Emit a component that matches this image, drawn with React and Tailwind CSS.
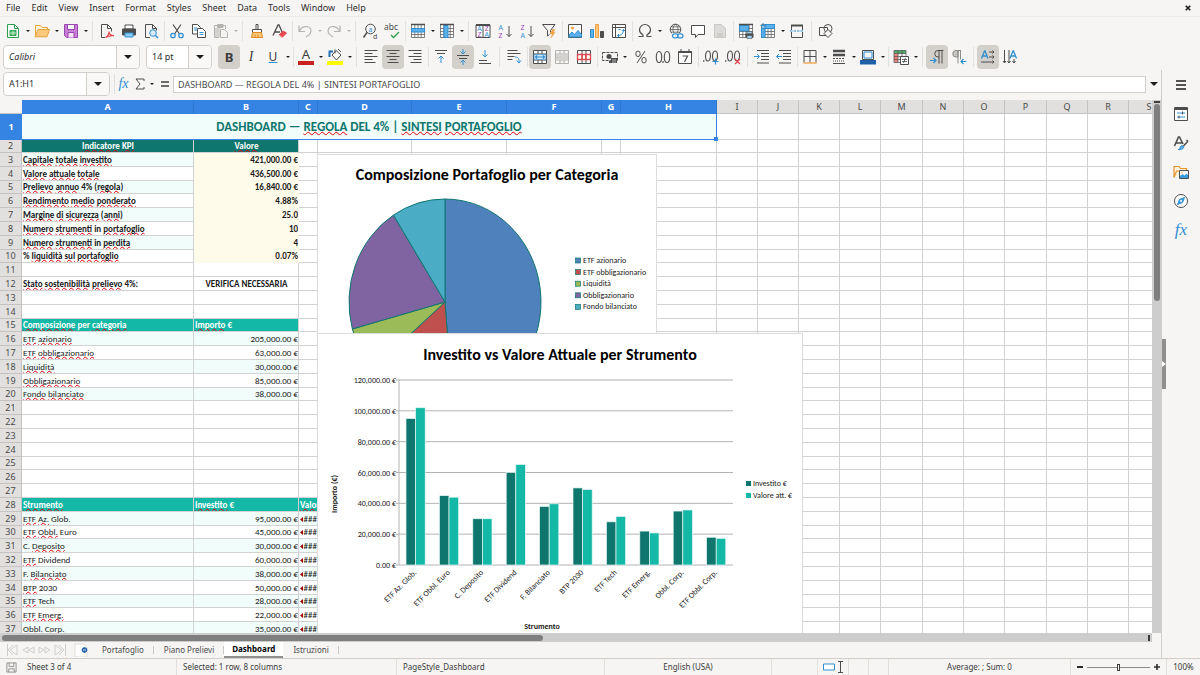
import clsx from 'clsx'

// ── Icon palette ─────────────────────────────────────────────────────
const K = '#4d4d4d'
const B = '#2f8fd3'
const R = '#e5484d'
const O = '#f0a040'
const G = '#b5b3b0'

const Az = ({ x, y, t, c }) => (
  <text x={x} y={y} fontSize="7" fontFamily="Noto Sans, sans-serif" fill={c}>{t}</text>
)

const GridLines = ({ c = K }) => (
  <path d="M1.5 1.5h13v13h-13zM1.5 5.500h13M1.5 8.5h13M1.500 11.500h13M4.8 1.5v13M8 1.5v13M11.2 1.5v13" fill="#fff" stroke={c} strokeWidth=".7" />
)

const ICONS = {
  new: <><path d="M2.5 1.5h7l4 4v9h-11z" fill="#fff" stroke="#2e9e4f" /><path d="M9.5 1.5v4h4" stroke="#2e9e4f" /><path d="M5 7.5h6v5H5z" fill="#48b864" stroke="#2e9e4f" /><path d="M5 10h6M8 7.5v5" stroke="#fff" strokeWidth=".7" /></>,
  open: <><path d="M1.5 13.5v-11h5l1.5 2h5.5v2" fill="#fff3dc" stroke="#e8a33d" /><path d="M1 13.8l3-7.3h11.5l-2.5 7.3z" fill="#fbc87c" stroke="#e8a33d" /></>,
  save: <><path d="M1.5 1.5h13v13h-11l-2-2z" fill="#c77fd6" stroke="#9b45b2" /><path d="M4.5 1.5h7v5h-7z" fill="#fff" stroke="#9b45b2" /><path d="M5 14.5v-5h6v5" fill="#f4e3f8" stroke="#9b45b2" /></>,
  pdf: <><path d="M2.5 1.5h6l4 4v3M6 14.5H2.5v-13" stroke={K} /><path d="M8.5 1.5v4h4" stroke={K} /><path d="M6.5 14.500c2.500-1.500 3.500-3.500 3.500-6 0 2.500 2 4 5 4.200-3-.2-6 .3-8.500 1.800z" stroke={R} strokeWidth="1.200" /></>,
  print: <><path d="M4 2h8v4H4z" fill="#fff" stroke={K} /><path d="M1.500 6h13v6h-13z" fill={K} stroke={K} /><path d="M4 10h8v4H4z" fill="#8ecbf2" stroke={B} /></>,
  preview: <><path d="M2.5 1.5h7l4 4v2M7 14.500H2.500v-13M9.500 1.500v4h4" stroke={K} /><circle cx="10" cy="10" r="3.300" fill="#d6ecfa" stroke={B} /><path d="M12.500 12.500l2.500 2.500" stroke={B} strokeWidth="1.500" /></>,
  cut: <><path d="M4 1.500l6.500 9.500M12 1.500L5.500 11" stroke={K} strokeWidth="1.200" /><circle cx="4" cy="12.500" r="2.200" stroke={B} strokeWidth="1.300" /><circle cx="12" cy="12.500" r="2.200" stroke={B} strokeWidth="1.300" /></>,
  copy: <><path d="M1.500 1.500h5l3 3v6.500h-8z" fill="#fff" stroke={K} /><path d="M6.500 5.500h5l3 3v6h-8z" fill="#fff" stroke={K} /><path d="M3 5h3M3 7h3M8.500 9.500h4M8.500 11.500h4" stroke={B} /></>,
  paste: <><path d="M5 2.500H1.500v12H6M10 2.500h2.500V6" stroke={G} /><path d="M4.500 1.500h5.500v3H4.500z" fill={G} stroke={G} /><path d="M2 5h5v9H2z" fill="#d4d2cf" /><path d="M7.500 6.500h4l3 3v5h-7z" fill="#f3f2f1" stroke={G} /></>,
  brush: <><path d="M7 1.500h2v5H7zM3.500 6.500h9v3h-9z" fill="#fff" stroke={K} /><path d="M3.500 9.500h9l1 5h-11z" fill="#fbc87c" stroke="#e08a1e" /><path d="M6 11.500v3M9 11.500v3" stroke="#e08a1e" /></>,
  clear: <><path d="M2 12.500L7 2h1l3.500 8M4 9h5" stroke={K} strokeWidth="1.300" /><path d="M8 12l4-4 3.500 2-4.500 4.500z" fill={R} stroke={R} /><path d="M8 12l3 2.500" stroke="#fff" strokeWidth=".6" /></>,
  undo: <path d="M2 2.500v6h6M2.500 8c2-5 9-6 11-2 1.500 3-1 6-4.500 8" stroke={G} strokeWidth="1.200" />,
  redo: <path d="M14 2.500v6H8M13.500 8c-2-5-9-6-11-2-1.500 3 1 6 4.500 8" stroke={G} strokeWidth="1.200" />,
  find: <><circle cx="8.500" cy="6" r="4.800" stroke={K} /><path d="M5 9.500l-3.500 5" stroke={K} strokeWidth="1.500" /><Az x="6.500" y="8.500" t="a" c={B} /><Az x="11" y="15.500" t="d" c={K} /></>,
  spell: <><text x="0" y="7" fontSize="8.500" fontFamily="Noto Sans, sans-serif" fill={K}>abc</text><path d="M7 12l2.500 2.500L15 9" stroke="#2e9e4f" strokeWidth="1.300" /></>,
  rows: <><GridLines /><path d="M1.500 5.500h13v3.500h-13z" fill="#5bb0ea" stroke={B} /><path d="M1 1.500h14" stroke={K} strokeWidth="1.500" /></>,
  cols: <><GridLines /><path d="M5 2.500h4v12H5z" fill="#5bb0ea" stroke={B} /><path d="M1 1.500h14" stroke={K} strokeWidth="1.500" /></>,
  sort: <><path d="M1 2h14v12.500H1zM8 2v12" stroke={K} fill="#fff" /><path d="M1 2h14" stroke={K} strokeWidth="2" /><Az x="2.300" y="8.200" t="A" c={B} /><Az x="2.500" y="14.200" t="Z" c="#a33bbd" /><Az x="9.800" y="8.200" t="Z" c="#a33bbd" /><Az x="9.500" y="14.200" t="A" c={B} /></>,
  asc: <><Az x="1.500" y="7" t="A" c={B} /><Az x="1.500" y="15" t="Z" c="#a33bbd" /><path d="M12 3v10.500M9.500 11l2.500 2.500 2.500-2.500" stroke={K} /></>,
  desc: <><Az x="1.500" y="7" t="Z" c="#a33bbd" /><Az x="1.500" y="15" t="A" c={B} /><path d="M12 3v10.500M9.500 11l2.500 2.500 2.500-2.500" stroke={K} /></>,
  filter: <><path d="M1.500 1.500h12.500L9.500 7.500v2M6.500 7.500v5.500l2-1.500M1.500 1.500l5 6" stroke={K} /><path d="M11.500 6.500L9 11h2.500l-1.500 4 4-5.500h-2l2-3z" fill={O} stroke={O} strokeWidth=".5" /></>,
  image: <><path d="M1.500 1.500h13v13h-13z" fill="#fff" stroke={K} /><circle cx="5.500" cy="5" r="1.500" fill={O} /><path d="M2 14v-2l3-3 2.500 2.500L11 7.500l3.500 4V14z" fill="#5bb0ea" stroke={B} /></>,
  chart: <><path d="M1.500 6.500h3v8h-3z" fill="#5bb0ea" stroke={B} /><path d="M6.500 1.500h3v13h-3z" fill="#fbc87c" stroke={O} /><path d="M11.500 8.500h3v6h-3z" fill={K} stroke={K} /></>,
  pivot: <><path d="M1.500 1.500h13v13h-13zM1.500 4.500h13M4.500 1.500v13" fill="#fff" stroke={K} /><path d="M12.500 6.500c0 4-2 6-6 6M11 8l1.500-1.500L14 8M8 11l-1.500 1.500L8 14M7.500 6.500h2" stroke={B} /></>,
  omega: <path d="M1.500 13.500H6v-1.500C3.500 10.500 2.500 9 2.500 7a5.500 5.500 0 0111 0c0 2-1 3.500-3.500 5v1.500h4.500" stroke={K} strokeWidth="1.200" />,
  link: <><circle cx="7.500" cy="6.500" r="5.300" stroke={K} /><path d="M2.200 6.500h10.600M7.500 1.200c-3.500 3-3.500 7.500 0 10.600M7.500 1.200c3.500 3 3.500 7.500 0 10.600M3 3.800h9M3 9.200h9" stroke={K} strokeWidth=".7" /><path d="M4 10h12v5.500H4z" fill="#f6f5f4" /><rect x="4.500" y="10.800" width="5.500" height="4" rx="2" stroke={B} strokeWidth="1.200" /><rect x="9.500" y="10.800" width="5.500" height="4" rx="2" stroke={B} strokeWidth="1.200" /></>,
  comment: <path d="M1.500 2.500h13v9H8L5.500 14.500v-3h-4z" fill="#fff" stroke={K} />,
  doc: <><path d="M2.500 1.500h7l4 4v9h-11z" fill="#dcdbd9" stroke="#cbc9c6" /><path d="M5 10h6v4H5z" fill="#cfcdca" /></>,
  printArea: <><GridLines /><path d="M1.500 2.500h9v5.500h-9z" fill="#5bb0ea" stroke={B} /><path d="M1 1.500h14" stroke={K} strokeWidth="1.500" /><path d="M7.500 10.500h8v4h-8z" fill={K} /><path d="M9 8.500h5v2H9zM9 12.500h5v3H9z" fill="#9fd2f3" stroke={K} strokeWidth=".6" /></>,
  freeze: <><GridLines /><path d="M5 1.500h9.500v4H5zM1.500 5.500H5v9H1.500z" fill="#5bb0ea" stroke={B} /><path d="M3 0v5M.5 2.500h5" stroke={B} /></>,
  split: <><path d="M2.500 7V2.500h11V7M2.500 9v5.500h11V9" stroke={K} /><path d="M2 2.500h12" stroke={K} strokeWidth="2" /><path d="M1 8h14" stroke={B} strokeDasharray="2.500 1" /></>,
  shapes: <><path d="M1.500 4.500h8v8h-8z" stroke={K} /><circle cx="10" cy="5.500" r="4" stroke={K} /><path d="M10 6.500l4 4-4 4-4-4z" fill="#f6f5f4" stroke={K} /></>,
  left: <path d="M1.500 1.500h13M1.500 4.500h8M1.500 7.500h13M1.500 10.500h8M1.500 13.500h11" stroke={K} />,
  center: <path d="M1.500 1.500h13M4.500 4.500h7M1.500 7.500h13M4.500 10.500h7M2.500 13.500h11" stroke={K} />,
  right: <path d="M1.500 1.500h13M6.500 4.500h8M1.500 7.500h13M6.500 10.500h8M3.500 13.500h11" stroke={K} />,
  top: <><path d="M2 1.500h12M4 4.500h8" stroke={K} /><path d="M8 14V7M5.500 9.500L8 7l2.500 2.500" stroke={B} /></>,
  middle: <><path d="M2 6.500h12M4 9.500h8" stroke={K} /><path d="M8 0v5M5.500 2.500L8 5l2.500-2.500M8 16v-5M5.500 13.500L8 11l2.500 2.500" stroke={B} /></>,
  bottom: <><path d="M2 11.500h8M2 14.500h12" stroke={K} /><path d="M8 1v7M5.500 5.500L8 8l2.500-2.500" stroke={B} /></>,
  wrap: <><path d="M1.500 1.500h10M1.500 4.500h13M1.500 7.500h7M1.500 10.500h5" stroke={K} /><path d="M9 8c4 0 4 2 4 5.500M10.500 11.500l2.500 2.500 2-2.500" stroke={B} /></>,
  merge: <><path d="M1.500 1.500h13v13h-13zM1.500 5h13M1.500 11h13M6 1.500V5M10 1.500V5M6 11v3.500M10 11v3.500" fill="#fff" stroke={K} /><path d="M2 5.500h12v5H2z" fill="#cde7f9" stroke={B} strokeWidth=".6" /><path d="M3 8h10M5 6.500L3.500 8 5 9.500M11 6.500L12.500 8 11 9.500" stroke={B} strokeWidth="1.200" /></>,
  mergeOff: <><path d="M1.500 1.500h13v13h-13zM1.500 5h13M1.500 11h13M6 1.500V5M10 1.500V5M6 11v3.500M10 11v3.500" stroke={G} /><path d="M2 6h12v4H2z" fill="#d4d2cf" /></>,
  unmerge: <><path d="M1.500 1.500h13v13h-13zM6 1.500v13M10 1.500v13" fill="#fff" stroke={K} /><path d="M1.500 5.500h13v5h-13zM6 5.500v5M10 5.500v5" stroke={R} strokeWidth="1.300" /></>,
  currency: <><path d="M.5 3.500h15v8h-15z" stroke={K} strokeDasharray="3 1" /><circle cx="7" cy="7.500" r="2.500" fill={K} /><path d="M9 9h6v5H7v-2h2z" fill={K} /><path d="M10 11h4M10 13h4" stroke="#fff" strokeWidth=".6" /></>,
  percent: <><ellipse cx="5" cy="4.800" rx="2.200" ry="2.800" stroke={K} /><ellipse cx="11" cy="11.200" rx="2.200" ry="2.800" stroke={K} /><path d="M12 2L4 14" stroke={K} /></>,
  number: <><ellipse cx="4" cy="8" rx="2.700" ry="5.500" stroke={K} strokeWidth="1.100" /><ellipse cx="12" cy="8" rx="2.700" ry="5.500" stroke={K} strokeWidth="1.100" /><path d="M8 12v2" stroke={K} strokeWidth="1.200" /></>,
  date: <><path d="M1.500 2.500h13v12h-13z" stroke={K} fill="#fff" /><path d="M1.500 3h13" stroke={K} strokeWidth="2" /><path d="M4 0v3M12 0v3" stroke={K} /><path d="M5.500 7h5l-3 6" stroke={K} strokeWidth="1.200" /></>,
  addDec: <><ellipse cx="5" cy="7" rx="2.500" ry="5" stroke={K} strokeWidth="1.100" /><ellipse cx="12" cy="7" rx="2.500" ry="5" stroke={K} strokeWidth="1.100" /><path d="M.8 11v2" stroke={K} /><path d="M9.500 12.500h6M12.500 9.500v6" stroke={B} strokeWidth="1.200" /></>,
  delDec: <><ellipse cx="5" cy="7" rx="2.500" ry="5" stroke={K} strokeWidth="1.100" /><ellipse cx="12" cy="7" rx="2.500" ry="5" stroke={K} strokeWidth="1.100" /><path d="M.8 11v2" stroke={K} /><path d="M10 10l5 5M15 10l-5 5" stroke={R} strokeWidth="1.200" /></>,
  indent: <><path d="M3 1.500h12M7 4.500h8M7 7.500h8M7 10.500h8M3 14h12" stroke={K} /><path d="M0 7.500h5M3 5l2.500 2.500L3 10" stroke={B} /></>,
  outdent: <><path d="M3 1.500h12M7 4.500h8M7 7.500h8M7 10.500h8M3 14h12" stroke={K} /><path d="M.5 7.500H6M3 5L.5 7.500 3 10" stroke={B} /></>,
  borders: <><path d="M2 1.500h12v12M2 1.500v12M8 1.500v12M2 7.500h12" stroke={K} /><path d="M1.500 14h13" stroke={O} strokeWidth="1.300" /></>,
  lines: <><path d="M2 2h12M2 6h12" stroke={K} strokeWidth="2.500" /><path d="M2 9.500h12" stroke={K} strokeDasharray="2 1" /><path d="M2 12h12" stroke={K} strokeDasharray="1 1" /><path d="M2 14.500h12" stroke={K} /></>,
  borderColor: <><path d="M2.500 1.500h11v9h-11z" stroke={K} /><path d="M4 3h8v6H4z" stroke={B} /><path d="M0 11h16v4.500H0z" fill="#1f5fa8" /></>,
  cond: <><path d="M1 1.500h12v3H1z" fill="#4fae6a" /><path d="M1 4.500h4v9H1z" fill="#f0837f" /><path d="M1 1.500h12v12H1zM1 4.500h12M1 7.500h12M1 10.500h12M5 1.500v12M9 1.500v12" stroke={K} strokeWidth=".7" /><path d="M7.500 7.500h8v8h-8z" fill="#fff" stroke={K} /><path d="M9 10.500h5M9 12.500h5M12.500 9l-2 5" stroke={K} strokeWidth=".8" /></>,
  ltr: <><path d="M14.500 1.500H9a3 3 0 000 6.500h1M10 1.500v13M13 1.500v13" stroke={K} /><path d="M1 11.500h6M4.500 9L7 11.500 4.500 14" stroke={B} strokeWidth="1.200" /></>,
  rtl: <><path d="M7 1.500H5A3 3 0 005 8h2z" fill="#c9c7c4" stroke="#8d8b88" /><path d="M5 1.500h5M7 1.500v13M9.500 1.500v9" stroke="#8d8b88" /><path d="M10 12.500h5.500M12.500 10L10 12.500l2.500 2.500" stroke={B} strokeWidth="1.200" /></>,
  textH: <><path d="M1.500 9.500L4.500 2h.5l3 7.500M2.500 7h4.500" stroke={B} strokeWidth="1.300" /><path d="M9 3h5M12.500 1.500L14 3l-1.500 1.500M9 8h5M12.500 6.500L14 8l-1.500 1.500M1 13h13M12.500 11.500L14 13l-1.500 1.500" stroke={K} /></>,
  textV: <><path d="M8 9.500L11 2h.5l3 7.500M9 7h4.500" stroke={B} strokeWidth="1.300" /><path d="M2.500 1v13M1 12l1.500 2L4 12M7 1v13M5.500 12L7 14l1.500-2M12 10v4M10.500 12l1.500 2 1.500-2" stroke={K} /></>,
}

const Icon = ({ name, className = 'size-4' }) => (
  <svg viewBox="0 0 16 16" fill="none" className={clsx('shrink-0 overflow-visible', className)} aria-hidden="true">{ICONS[name]}</svg>
)

const Caret = ({ dim, big }) => (
  <svg viewBox="0 0 8 4" className={big ? 'w-2 h-1 shrink-0' : 'w-1 h-0.5 shrink-0'} aria-hidden="true">
    <path d="M0 0h8l-4 4z" fill={dim ? '#b5b3b0' : '#1d1d1d'} />
  </svg>
)

const Tool = ({ name, on, menu, dim, children }) => (
  <div className="flex shrink-0">
    <button type="button" aria-label={name} className={clsx('flex h-6 w-[22px] items-center justify-center rounded', on && 'bg-[#d3cfca]')}>
      {children || <Icon name={name} />}
    </button>
    {menu && (
      <button type="button" aria-label={`${name} options`} className="flex h-6 w-[7px] items-center justify-center">
        <Caret dim={dim} />
      </button>
    )}
  </div>
)

const Sep = ({ wide }) => (
  <div className={clsx('flex h-5 shrink-0 justify-center', wide ? 'w-[7px]' : 'w-1')}>
    <div className="w-px bg-[#e2e0dd]" />
  </div>
)

const Glyph = ({ children, className, bar }) => (
  <span className="flex flex-col items-center">
    <span className={clsx('text-[#3d3d3d]', className)}>{children}</span>
    {bar && <span className={clsx('h-1 w-4', bar)} />}
  </span>
)

const Fx = ({ className }) => (
  <span className={clsx('font-["Liberation_Serif",serif] italic text-[#2f8fd3]', className)}>fx</span>
)

const MENUS = ['File', 'Edit', 'View', 'Insert', 'Format', 'Styles', 'Sheet', 'Data', 'Tools', 'Window', 'Help']

function MenuBar() {
  return (
    <nav className="flex h-[17px] shrink-0 items-center gap-px border-b border-[#eceae8] px-1">
      {MENUS.map((m) => (
        <button key={m} type="button" className="px-[5px] first:pl-0.5">{m}</button>
      ))}
      <button type="button" aria-label="Close" className="ml-auto flex size-4 items-center justify-center">
        <svg viewBox="0 0 8 8" className="size-1.5"><path d="M1 1l6 6M7 1L1 7" stroke="#1d1d1d" strokeWidth="2.200" /></svg>
      </button>
    </nav>
  )
}

function StandardBar() {
  return (
    <div className="flex h-[27px] shrink-0 items-center pl-0.5">
      <Tool name="new" menu /><Tool name="open" menu /><Tool name="save" menu />
      <Sep wide />
      <Tool name="pdf" /><Tool name="print" /><Tool name="preview" />
      <Sep />
      <Tool name="cut" /><Tool name="copy" /><Tool name="paste" menu dim />
      <Sep wide />
      <Tool name="brush" /><Tool name="clear" />
      <Sep />
      <Tool name="undo" menu dim /><Tool name="redo" menu dim />
      <Sep wide />
      <Tool name="find" /><Tool name="spell" />
      <Sep />
      <Tool name="rows" menu /><Tool name="cols" menu />
      <Sep wide />
      <Tool name="sort" /><Tool name="asc" /><Tool name="desc" /><Tool name="filter" />
      <Sep />
      <Tool name="image" /><Tool name="chart" /><Tool name="pivot" />
      <Sep />
      <Tool name="omega" menu />
      <div className="ml-0.5 flex"><Tool name="link" /><Tool name="comment" /><Tool name="doc" /></div>
      <Sep />
      <Tool name="printArea" /><Tool name="freeze" menu /><Tool name="split" />
      <Sep wide />
      <Tool name="shapes" />
    </div>
  )
}

const Combo = ({ label, value, className, textClass }) => (
  <div className={clsx('relative flex h-6 shrink-0 overflow-hidden rounded border border-[#d2cfcb] bg-white', className)}>
    <select aria-label={label} defaultValue={value} className={clsx('w-full appearance-none bg-transparent pl-[5px] outline-none', textClass)}>
      <option>{value}</option>
    </select>
    <span className="pointer-events-none absolute inset-y-0 right-0 flex w-[23px] items-center justify-center border-l border-[#d2cfcb] bg-[#f9f8f7]">
      <Caret big />
    </span>
  </div>
)

function FormatBar() {
  return (
    <div className="flex h-[25px] shrink-0 items-center pl-[3px]">
      <Combo label="Font name" value="Calibri" className="mr-1.5 w-[137px]" textClass="italic" />
      <Combo label="Font size" value="14 pt" className="mr-1.5 w-[66px]" />
      <Tool name="bold" on><Glyph className="text-[13px] leading-[14px] font-bold">B</Glyph></Tool>
      <Tool name="italic"><Glyph className='font-["Liberation_Serif",serif] text-[14px] leading-[14px] italic'>I</Glyph></Tool>
      <Tool name="underline" menu><Glyph className="text-[12px] leading-[14px] underline decoration-[#2f8fd3]">U</Glyph></Tool>
      <Sep />
      <Tool name="font colour" menu><Glyph bar="bg-[#c9211e]" className="text-[13px] leading-[13px]">A</Glyph></Tool>
      <Tool name="highlight" menu>
        <svg viewBox="0 0 16 17" fill="none" className="h-[17px] w-4">
          <path d="M5 7l4-4.500 5 4.500-4.500 5z" fill="#fff" stroke={K} />
          <path d="M8 5.500V1.500M11 1l3 3" stroke={K} />
          <path d="M2.500 9V3.500H6" stroke="#1f6fb5" strokeWidth="2" />
          <path d="M0 13h16v4H0z" fill="#ffff00" />
        </svg>
      </Tool>
      <Sep wide />
      <Tool name="left" /><Tool name="center" on /><Tool name="right" />
      <Sep />
      <Tool name="top" /><Tool name="middle" on /><Tool name="bottom" />
      <Sep wide />
      <Tool name="wrap" />
      <Sep />
      <Tool name="merge" on /><Tool name="mergeOff" /><Tool name="unmerge" />
      <Sep />
      <Tool name="currency" menu />
      <div className="ml-0.5 flex"><Tool name="percent" /><Tool name="number" /><Tool name="date" /></div>
      <Sep />
      <Tool name="addDec" /><Tool name="delDec" />
      <Sep wide />
      <Tool name="indent" /><Tool name="outdent" />
      <Sep />
      <Tool name="borders" menu /><Tool name="lines" menu /><Tool name="borderColor" menu />
      <Sep />
      <Tool name="cond" menu />
      <Sep wide />
      <Tool name="ltr" on /><Tool name="rtl" />
      <Sep wide />
      <Tool name="textH" on /><Tool name="textV" />
    </div>
  )
}

function FormulaBar() {
  return (
    <div className="flex h-7 shrink-0 items-center pl-[3px]">
      <div className="flex h-6 w-[107px] shrink-0 overflow-hidden rounded border border-[#d2cfcb] bg-white">
        <input aria-label="Name box" defaultValue="A1:H1" className="min-w-0 flex-1 pl-[5px] outline-none" />
        <button type="button" aria-label="Names" className="flex w-[23px] items-center justify-center border-l border-[#d2cfcb] bg-[#f9f8f7]"><Caret big /></button>
      </div>
      <div className="ml-1 h-5 w-px bg-[#e2e0dd]" />
      <button type="button" aria-label="Function wizard" className="flex h-6 w-[17px] items-center justify-center"><Fx className="text-[14px] leading-4" /></button>
      <button type="button" aria-label="Sum" className="flex h-6 w-4 items-center justify-center">
        <svg viewBox="0 0 10 12" fill="none" className="h-3 w-2.5"><path d="M9 3V1H1l4 5-4 5h8V9" stroke={K} /></svg>
      </button>
      <button type="button" aria-label="Sum options" className="flex h-6 w-2 items-center justify-center"><Caret /></button>
      <button type="button" aria-label="Formula" className="flex h-6 w-[17px] flex-col items-center justify-center gap-0.5">
        <span className="h-0.5 w-2 bg-[#6b6b6b]" /><span className="h-0.5 w-2 bg-[#6b6b6b]" />
      </button>
      <input
        aria-label="Formula input"
        defaultValue="DASHBOARD — REGOLA DEL 4% | SINTESI PORTAFOGLIO"
        className="h-[17px] min-w-0 flex-1 border border-[#d2cfcb] bg-white pl-1 text-[#4a4a4a] outline-none"
      />
      <button type="button" aria-label="Expand formula bar" className="flex h-6 w-[15px] items-center justify-center"><Caret big /></button>
    </div>
  )
}

// ── Sheet data ───────────────────────────────────────────────────────
const COLUMNS = [
  ['A', 'w-[172px]'], ['B', 'w-[105px]'], ['C', 'w-[19px]'], ['D', 'w-[94px]'], ['E', 'w-[95px]'], ['F', 'w-[95px]'],
  ['G', 'w-[19px]'], ['H', 'w-[96px]'], ['I', 'w-[41px]'], ['J', 'w-[41px]'], ['K', 'w-[41px]'], ['L', 'w-[41px]'],
  ['M', 'w-[42px]'], ['N', 'w-[41px]'], ['O', 'w-[41px]'], ['P', 'w-[42px]'], ['Q', 'w-[41px]'], ['R', 'w-[41px]'],
  ['S', 'w-[41px]'],
]

// words between underscores are flagged by the spell checker
const KPIS = [
  ['_Capitale_ _totale_ _investito_', '421,000.00 €'],
  ['_Valore_ _attuale_ _totale_', '436,500.00 €'],
  ['_Prelievo_ _annuo_ 4% (_regola_)', '16,840.00 €'],
  ['_Rendimento_ _medio_ _ponderato_', '4.88%'],
  ['_Margine_ _di_ _sicurezza_ (_anni_)', '25.0'],
  ['_Numero_ _strumenti_ in _portafoglio_', '10'],
  ['_Numero_ _strumenti_ in _perdita_', '4'],
  ['% _liquidità_ _sul_ _portafoglio_', '0.07%'],
]

const CATEGORIES = [
  ['ETF azionario', '_ETF_ _azionario_', 205000, '#4f81bd'],
  ['ETF obbligazionario', '_ETF_ _obbligazionario_', 63000, '#c0504d'],
  ['Liquidità', '_Liquidità_', 30000, '#9bbb59'],
  ['Obbligazionario', '_Obbligazionario_', 85000, '#8064a2'],
  ['Fondo bilanciato', '_Fondo_ _bilanciato_', 38000, '#4bacc6'],
]

const HOLDINGS = [
  ['ETF Az. Glob.', '_ETF_ _Az._ Glob.', 95000, 102000],
  ['ETF Obbl. Euro', '_ETF_ _Obbl._ Euro', 45000, 44000],
  ['C. Deposito', 'C. _Deposito_', 30000, 30000],
  ['ETF Dividend', '_ETF_ Dividend', 60000, 65200],
  ['F. Bilanciato', 'F. _Bilanciato_', 38000, 39700],
  ['BTP 2030', '_BTP_ 2030', 50000, 49000],
  ['ETF Tech', '_ETF_ Tech', 28000, 31500],
  ['ETF Emerg.', '_ETF_ _Emerg._', 22000, 20800],
  ['Obbl. Corp.', '_Obbl._ _Corp._', 35000, 35700],
  ['ETF Obbl. Corp.', '_ETF_ _Obbl._ _Corp._', 18000, 17300],
]

const euro = (n) => `${n.toLocaleString('en-US', { minimumFractionDigits: 2 })} €`

const KPI_HEAD = 'bg-[#0f766e] text-white font-bold text-center'
const LIST_HEAD = 'bg-[#14b8a6] text-white font-bold align-bottom'

const ROWS = {
  2: { A: ['_Indicatore_ _KPI_', KPI_HEAD], B: ['_Valore_', KPI_HEAD] },
  12: { A: ['_Stato_ _sostenibilità_ _prelievo_ 4%:', 'font-bold align-bottom'], B: ['VERIFICA NECESSARIA', 'font-bold text-center'] },
  15: { A: ['_Composizione_ per _categoria_', LIST_HEAD], B: ['_Importo_ €', LIST_HEAD] },
  28: { A: ['_Strumento_', LIST_HEAD], B: ['_Investito_ €', LIST_HEAD], C: ['_Valore_ att. €', LIST_HEAD] },
}
const stripe = (i) => (i % 2 === 0 ? 'bg-teal-50' : 'bg-white')
KPIS.forEach(([label, value], i) => {
  ROWS[3 + i] = { A: [label, clsx('font-bold', stripe(i))], B: [value, 'font-bold text-right bg-amber-50 border-amber-50'] }
})
CATEGORIES.forEach(([, label, value], i) => {
  ROWS[16 + i] = { A: [label, clsx('align-bottom', stripe(i))], B: [euro(value), clsx('text-right align-bottom', stripe(i))] }
})
HOLDINGS.slice(0, 9).forEach(([, label, value], i) => {
  ROWS[29 + i] = {
    A: [label, clsx('align-bottom', stripe(i))],
    B: [euro(value), clsx('text-right align-bottom', stripe(i))],
    C: ['###', clsx('align-bottom', stripe(i))],
  }
})

const Spelled = ({ text }) =>
  text.split('_').map((part, i) =>
    i % 2 ? (
      <span key={i} className="underline decoration-red-600 decoration-wavy decoration-[0.8px] underline-offset-0 [text-decoration-skip-ink:none]">{part}</span>
    ) : (
      part
    )
  )

function Sheet() {
  const rowNumbers = Array.from({ length: 36 }, (_, i) => i + 2)
  return (
    <table className='w-0 table-fixed border-separate border-spacing-0 font-["Carlito","Lato",sans-serif] text-[9px] leading-[12px] text-[#1a1a1a]'>
      <colgroup>
        <col className="w-[22px]" />
        {COLUMNS.map(([c, w]) => <col key={c} className={w} />)}
      </colgroup>
      <thead className='font-["Noto_Sans",sans-serif]'>
        <tr className="h-[14px]">
          <th className="border-b border-[#c4c3c1] bg-[#f6f5f4] p-0" />
          {COLUMNS.map(([c], i) => (
            <th key={c} className={clsx('border-r p-0', i < 8 ? 'border-[#2f78cf] bg-[#3584e4] font-bold text-white' : 'border-b border-[#c4c3c1] bg-[#e1e0de] font-normal text-[#4a4a4a]')}>{c}</th>
          ))}
        </tr>
      </thead>
      <tbody>
        <tr className="h-[26px]">
          <th className='bg-[#3584e4] p-0 font-["Noto_Sans",sans-serif] font-bold text-white'>1</th>
          <td colSpan={8} className="relative border-r border-b border-[#3584e4] bg-teal-50 p-0 text-center text-[13px] leading-4 font-bold text-[#0f766e]">
            <Spelled text="DASHBOARD — _REGOLA_ DEL 4% | _SINTESI_ _PORTAFOGLIO_" />
            <span className="absolute -right-0.5 -bottom-0.5 size-1 bg-[#3584e4]" />
          </td>
          {COLUMNS.slice(8).map(([c]) => <td key={c} className="border-r border-b border-[#d2d2d2] p-0" />)}
        </tr>
        {rowNumbers.map((n) => (
          <tr key={n} className={n === 2 || n % 5 === 0 ? 'h-[13px]' : 'h-[14px]'}>
            <th className='border-r border-b border-[#c4c3c1] bg-[#e1e0de] p-0 font-["Noto_Sans",sans-serif] font-normal text-[#4a4a4a]'>{n}</th>
            {COLUMNS.map(([c]) => {
              const [text, style] = ROWS[n]?.[c] || ['', '']
              return (
                <td key={c} className={clsx('overflow-hidden border-r border-b p-0 pl-px whitespace-nowrap', !style.includes('border-amber') && 'border-[#d2d2d2]', style)}>
                  {text === '###' ? (
                    <span className="flex items-center justify-between">
                      <svg viewBox="0 0 3 5" className="h-[5px] w-[3px] shrink-0"><path d="M3 0v5L0 2.500z" fill="#a40000" /></svg>
                      ###
                    </span>
                  ) : (
                    <Spelled text={text} />
                  )}
                </td>
              )
            })}
          </tr>
        ))}
      </tbody>
    </table>
  )
}

// ── Charts ───────────────────────────────────────────────────────────
const TITLE = 'font-["Carlito","Lato",sans-serif] text-[16px] font-bold fill-black'
const LABEL = 'font-["Carlito","Lato",sans-serif] text-[8px] fill-[#1a1a1a]'

function PieChart() {
  const cx = 127
  const cy = 147
  const rx = 96
  const ry = 103
  const total = CATEGORIES.reduce((s, c) => s + c[2], 0)
  let angle = 0
  return (
    <svg width="340" height="180" className="absolute top-[54px] left-[317px] border border-[#dcdcdc] bg-white" role="img" aria-label="Composizione Portafoglio per Categoria">
      <text x="169" y="25" textAnchor="middle" className={TITLE}>Composizione Portafoglio per Categoria</text>
      {CATEGORIES.map(([name, , value, color]) => {
        const from = angle
        angle += (value / total) * Math.PI * 2
        const p = (a) => `${cx + rx * Math.sin(a)} ${cy - ry * Math.cos(a)}`
        return <path key={name} d={`M${cx} ${cy}L${p(from)}A${rx} ${ry} 0 0 1 ${p(angle)}Z`} fill={color} stroke="#0f766e" />
      })}
      {CATEGORIES.map(([name, , , color], i) => (
        <g key={name}>
          <rect x="257.500" y={103 + i * 11.6} width="5" height="5" fill={color} stroke="#0f766e" strokeWidth=".7" />
          <text x="265" y={108 + i * 11.6} className={LABEL}>{name}</text>
        </g>
      ))}
    </svg>
  )
}

function BarChart() {
  const x0 = 81
  const y0 = 231
  const step = 33.4
  const bar = 9.6
  const h = (v) => (v / 120000) * 185
  return (
    <svg width="486" height="310" className="absolute top-[233px] left-[317px] border border-[#dcdcdc] bg-white" role="img" aria-label="Investito vs Valore Attuale per Strumento">
      <text x="242" y="26" textAnchor="middle" className={TITLE}>Investito vs Valore Attuale per Strumento</text>
      {[0, 1, 2, 3, 4, 5, 6].map((i) => (
        <g key={i}>
          <path d={`M${x0 - 3} ${y0 - h(i * 20000)}H${x0 + 334}`} stroke="#b3b3b3" />
          <text x={x0 - 3} y={y0 + 3 - h(i * 20000)} textAnchor="end" className={LABEL}>{euro(i * 20000)}</text>
        </g>
      ))}
      <path d={`M${x0} ${y0}v-185`} stroke="#b3b3b3" />
      {HOLDINGS.map(([name, , a, b], i) => {
        const x = x0 + 7 + i * step
        return (
          <g key={name}>
            <rect x={x} y={y0 - h(a)} width={bar} height={h(a)} fill="#0f766e" stroke="#e6f7f5" strokeWidth=".7" />
            <rect x={x + bar} y={y0 - h(b)} width={bar} height={h(b)} fill="#14b8a6" stroke="#e6f7f5" strokeWidth=".7" />
            <text transform={`translate(${x + 11} ${y0 + 8}) rotate(-45)`} textAnchor="end" className={LABEL}>{name}</text>
          </g>
        )
      })}
      <text transform="translate(19 160) rotate(-90)" textAnchor="middle" className={clsx(LABEL, 'font-bold')}>Importo (€)</text>
      <text x="224" y="295" textAnchor="middle" className={clsx(LABEL, 'font-bold')}>Strumento</text>
      <rect x="428" y="147" width="5" height="5" fill="#0f766e" />
      <text x="435" y="152" className={LABEL}>Investito €</text>
      <rect x="428" y="159" width="5" height="5" fill="#14b8a6" />
      <text x="435" y="164" className={LABEL}>Valore att. €</text>
    </svg>
  )
}

function Workspace() {
  return (
    <div className="flex min-h-0 flex-1 flex-col pt-0.5">
      <div className="flex min-h-0 flex-1">
        <div className="relative min-w-0 flex-1 overflow-hidden bg-white">
          <Sheet />
          <PieChart />
          <BarChart />
        </div>
        <div className="flex w-[9px] shrink-0 flex-col items-center bg-[#cdcdcd]">
          <div className="mt-px h-0.5 w-1.5 bg-[#3d3d3d]" />
          <div className="mt-px h-[37%] w-1.5 rounded-full bg-[#7f7f7f]" />
        </div>
      </div>
      <div className="mr-[9px] flex h-[9px] shrink-0 items-center justify-between bg-[#cdcdcd] pl-0.5">
        <div className="h-1.5 w-[47%] rounded-full bg-[#7f7f7f]" />
        <div className="mr-0.5 h-1.5 w-0.5 bg-[#3d3d3d]" />
      </div>
    </div>
  )
}

function SheetTabs() {
  return (
    <div className="flex h-4 shrink-0 items-stretch text-[8px]">
      <svg viewBox="0 0 64 14" fill="none" className="mt-px ml-1 h-3.5 w-16" aria-hidden="true">
        <path d="M3.500 1v12M13 2L6 7l7 5zM4 7l5-5M4 7l5 5M24 4l-5 3 5 3zM30 4l-5 3 5 3zM35 4l5 3-5 3zM41 4l5 3-5 3zM51 2l7 5-7 5zM55 2l5 5-5 5M61.500 1v12" stroke="#d0cecb" />
      </svg>
      <button type="button" aria-label="Add sheet" className="ml-1.5 flex w-3.5 items-center">
        <svg viewBox="0 0 14 14" fill="none" className="size-3.5"><path d="M1 1h9l3 3v10H1z" fill="#fff" stroke="#dedcd9" /><circle cx="10.500" cy="7" r="2" stroke="#1f5fa8" strokeWidth="1.300" /><path d="M10.500 4v6M7.500 7h6" stroke="#1f5fa8" strokeWidth=".6" /></svg>
      </button>
      {['Portafoglio', 'Piano Prelievi', 'Dashboard', 'Istruzioni'].map((t) => (
        <button
          key={t}
          type="button"
          className={clsx('relative', t === 'Portafoglio' && 'ml-1', t === 'Dashboard' ? 'border-b-2 border-[#8f8f8f] bg-white px-2 font-bold text-black' : 'px-2.5 text-[#4a4a4a]')}
        >
          {t}
          {t !== 'Dashboard' && <span className="absolute top-1 right-0 h-2 w-px bg-[#c9c7c4]" />}
        </button>
      ))}
    </div>
  )
}

function SideBar() {
  const btn = 'flex size-6 items-center justify-center'
  return (
    <aside className="relative flex w-[39px] shrink-0 flex-col items-center gap-[5px] border-l border-[#d2cfcb] pt-[3px]">
      <button type="button" aria-label="Sidebar settings" className={btn}>
        <svg viewBox="0 0 16 16" className="size-4"><path d="M3 4h10M3 8h10M3 12h10" stroke="#1d1d1d" strokeWidth="1.500" /></svg>
      </button>
      <button type="button" aria-label="Properties" className={btn}>
        <svg viewBox="0 0 16 16" fill="none" className="size-4"><path d="M1.500 1.500h13v13h-13z" fill="#fff" stroke={K} /><path d="M1.500 3h13" stroke={K} strokeWidth="2" /><path d="M4 7h8M4 11h8" stroke={B} /><path d="M9.500 5.500v3M6 9.500v3" stroke={K} /></svg>
      </button>
      <button type="button" aria-label="Styles" className={btn}>
        <svg viewBox="0 0 16 16" fill="none" className="size-4"><path d="M1.500 11L5.500 2h1L10 9M3 8h6" stroke={K} strokeWidth="1.600" /><path d="M15 6l-4.500 5M13.500 5l1.500 1" stroke={K} strokeWidth="1.500" /><path d="M5 14.500c2 .5 5 0 6-2.500L9 10.500c-1 .5-2 1-2 2.500 0 1-1 1.500-2 1.500z" fill="#5bb0ea" stroke={B} /></svg>
      </button>
      <button type="button" aria-label="Gallery" className={btn}>
        <svg viewBox="0 0 16 16" fill="none" className="size-4"><path d="M1 13.500v-11h5l1.500 2h6V7M1 13.500L3.500 7H6" fill="#fff3dc" stroke="#e8912d" strokeWidth="1.200" /><path d="M6.500 6.500h9v8h-9z" fill="#fff" stroke={K} /><path d="M7 14v-2l2.500-2 2 1.500L13.500 9.500 15 11v3z" fill="#3a9bdc" /><circle cx="9" cy="8.500" r=".8" fill={O} /></svg>
      </button>
      <button type="button" aria-label="Navigator" className={btn}>
        <svg viewBox="0 0 16 16" fill="none" className="size-4"><circle cx="8" cy="8" r="6.500" fill="#fff" stroke={K} /><path d="M11.500 4.500L9.500 9.500l-5 2 2-5z" fill="#3a9bdc" stroke={B} /><circle cx="8" cy="8" r="1" fill="#fff" /></svg>
      </button>
      <button type="button" aria-label="Functions" className={btn}><Fx className="text-[17px] leading-5" /></button>
      <button type="button" aria-label="Collapse sidebar" className="absolute top-[269px] left-0 flex h-[50px] w-1 items-center justify-center bg-[#8f8f8f]">
        <svg viewBox="0 0 4 6" className="h-1.5 w-1"><path d="M0 0l4 3-4 3z" fill="#fff" /></svg>
      </button>
    </aside>
  )
}

function StatusBar() {
  const cell = 'flex min-w-0 items-center border-r border-[#e2e0dd]'
  return (
    <footer className="grid h-[17px] shrink-0 grid-cols-[177fr_220fr_208fr_167fr_46fr_31fr_20fr_20fr_182fr_96fr_33fr] border-t border-[#d2cfcb] text-[8px] text-[#3a3a3a]">
      <div className={clsx(cell, 'gap-2.5 pl-1.5')}>
        <svg viewBox="0 0 12 12" fill="none" className="size-[11px]"><path d="M1 1h10v10H1zM3.500 1v4h5V1M3 11V7.500h6V11" stroke="#8d8b88" /></svg>
        Sheet 3 of 4
      </div>
      <div className={clsx(cell, 'pl-1.5')}>Selected: 1 row, 8 columns</div>
      <div className={clsx(cell, 'pl-1.5')}>PageStyle_Dashboard</div>
      <div className={clsx(cell, 'justify-center')}>English (USA)</div>
      <div className={cell} />
      <div className={clsx(cell, 'justify-center gap-[3px]')}>
        <svg viewBox="0 0 12 8" fill="none" className="h-2 w-3"><path d="M.5 1h11v6H.5z" fill="#fff" stroke={B} /></svg>
        <svg viewBox="0 0 5 12" fill="none" className="h-3 w-[5px]"><path d="M0 .5h5M0 11.500h5M2.500 0v12" stroke={K} /></svg>
      </div>
      <div className={cell} />
      <div className={cell} />
      <div className={clsx(cell, 'justify-center')}>Average: ; Sum: 0</div>
      <div className={clsx(cell, 'gap-1 px-1.5')}>
        <button type="button" aria-label="Zoom out" className="h-0.5 w-1.5 shrink-0 bg-[#2d2d2d]" />
        <input
          type="range"
          aria-label="Zoom"
          defaultValue="50"
          className="h-px min-w-0 flex-1 appearance-none bg-[#8d8b88] [&::-webkit-slider-thumb]:h-[7px] [&::-webkit-slider-thumb]:w-[3px] [&::-webkit-slider-thumb]:appearance-none [&::-webkit-slider-thumb]:border [&::-webkit-slider-thumb]:border-[#3d3d3d] [&::-webkit-slider-thumb]:bg-white"
        />
        <button type="button" aria-label="Zoom in" className="flex size-1.5 shrink-0">
          <svg viewBox="0 0 6 6" className="size-1.5"><path d="M3 0v6M0 3h6" stroke="#2d2d2d" strokeWidth="1.600" /></svg>
        </button>
      </div>
      <div className="flex min-w-0 items-center justify-center">100%</div>
    </footer>
  )
}

export default function App() {
  return (
    <div className='flex h-screen w-full flex-col overflow-hidden bg-[#f6f5f4] font-["Noto_Sans",sans-serif] text-[9px] leading-3 text-[#2e2e2e]'>
      <MenuBar />
      <StandardBar />
      <FormatBar />
      <div className="flex min-h-0 flex-1 pt-px">
        <div className="flex min-w-0 flex-1 flex-col">
          <FormulaBar />
          <Workspace />
          <SheetTabs />
        </div>
        <SideBar />
      </div>
      <StatusBar />
    </div>
  )
}
